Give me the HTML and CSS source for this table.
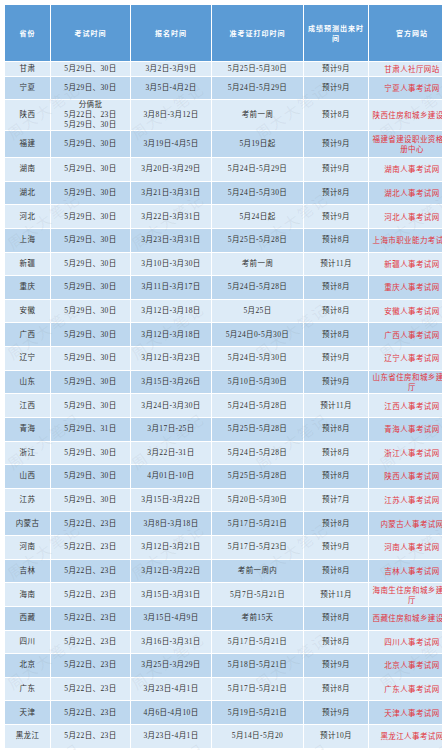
FILE: index.html
```html
<!DOCTYPE html>
<html lang="zh-CN">
<head>
<meta charset="utf-8">
<title>考试时间表</title>
<link rel="stylesheet" href="styles.css">
</head>
<body>
<div class="page">
  <table class="exam">
    <colgroup>
      <col class="w1"><col class="w2"><col class="w3"><col class="w4"><col class="w5"><col class="w6">
    </colgroup>
    <thead>
      <tr><th>省份</th><th>考试时间</th><th>报名时间</th><th>准考证打印时间</th><th>成绩预测出来时间</th><th>官方网站</th></tr>
    </thead>
    <tbody>
      <tr class="lt h15"><td>甘肃</td><td>5月29日、30日</td><td>3月2日-3月9日</td><td>5月25日-5月30日</td><td>预计9月</td><td class="site">甘肃人社厅网站</td></tr>
      <tr class="dk h23"><td>宁夏</td><td>5月29日、30日</td><td>3月5日-4月2日</td><td>5月24日-5月29日</td><td>预计9月</td><td class="site">宁夏人事考试网</td></tr>
      <tr class="lt h31"><td>陕西</td><td>分俩批<br>5月22日、23日<br>5月29日、30日</td><td>3月8日-3月12日</td><td>考前一周</td><td>预计8月</td><td class="site">陕西住房和城乡建设厅</td></tr>
      <tr class="dk h27"><td>福建</td><td>5月29日、30日</td><td>3月19日-4月5日</td><td>5月19日起</td><td>预计9月</td><td class="site">福建省建设职业资格注册中心</td></tr>
      <tr class="lt"><td>湖南</td><td>5月29日、30日</td><td>3月20日-3月29日</td><td>5月24日-5月29日</td><td>预计9月</td><td class="site">湖南人事考试网</td></tr>
      <tr class="dk"><td>湖北</td><td>5月29日、30日</td><td>3月21日-3月31日</td><td>5月24日-5月30日</td><td>预计8月</td><td class="site">湖北人事考试网</td></tr>
      <tr class="lt"><td>河北</td><td>5月29日、30日</td><td>3月22日-3月31日</td><td>5月24日起</td><td>预计9月</td><td class="site">河北人事考试网</td></tr>
      <tr class="dk"><td>上海</td><td>5月29日、30日</td><td>3月23日-3月31日</td><td>5月25日-5月28日</td><td>预计8月</td><td class="site">上海市职业能力考试院</td></tr>
      <tr class="lt"><td>新疆</td><td>5月29日、30日</td><td>3月10日-3月30日</td><td>考前一周</td><td>预计11月</td><td class="site">新疆人事考试网</td></tr>
      <tr class="dk"><td>重庆</td><td>5月29日、30日</td><td>3月11日-3月17日</td><td>5月24日-5月28日</td><td>预计8月</td><td class="site">重庆人事考试网</td></tr>
      <tr class="lt"><td>安徽</td><td>5月29日、30日</td><td>3月12日-3月18日</td><td>5月25日</td><td>预计8月</td><td class="site">安徽人事考试网</td></tr>
      <tr class="dk"><td>广西</td><td>5月29日、30日</td><td>3月12日-3月18日</td><td>5月24日0-5月30日</td><td>预计8月</td><td class="site">广西人事考试网</td></tr>
      <tr class="lt"><td>辽宁</td><td>5月29日、30日</td><td>3月12日-3月23日</td><td>5月24日-5月30日</td><td>预计9月</td><td class="site">辽宁人事考试网</td></tr>
      <tr class="dk"><td>山东</td><td>5月29日、30日</td><td>3月15日-3月26日</td><td>5月10日-5月30日</td><td>预计9月</td><td class="site">山东省住房和城乡建设厅</td></tr>
      <tr class="lt"><td>江西</td><td>5月29日、30日</td><td>3月24日-3月30日</td><td>5月24日-5月28日</td><td>预计11月</td><td class="site">江西人事考试网</td></tr>
      <tr class="dk"><td>青海</td><td>5月29日、31日</td><td>3月17日-25日</td><td>5月25日-5月28日</td><td>预计8月</td><td class="site">青海人事考试网</td></tr>
      <tr class="lt"><td>浙江</td><td>5月29日、30日</td><td>3月22日-31日</td><td>5月24日-5月28日</td><td>预计8月</td><td class="site">浙江人事考试网</td></tr>
      <tr class="dk"><td>山西</td><td>5月29日、30日</td><td>4月01日-10日</td><td>5月25日-5月28日</td><td>预计8月</td><td class="site">陕西人事考试网</td></tr>
      <tr class="lt"><td>江苏</td><td>5月29日、30日</td><td>3月15日-3月22日</td><td>5月20日-5月30日</td><td>预计7月</td><td class="site">江苏人事考试网</td></tr>
      <tr class="dk"><td>内蒙古</td><td>5月22日、23日</td><td>3月8日-3月18日</td><td>5月17日-5月21日</td><td>预计8月</td><td class="site">内蒙古人事考试网</td></tr>
      <tr class="lt"><td>河南</td><td>5月22日、23日</td><td>3月12日-3月21日</td><td>5月17日-5月23日</td><td>预计9月</td><td class="site">河南人事考试网</td></tr>
      <tr class="dk"><td>吉林</td><td>5月22日、23日</td><td>3月12日-3月22日</td><td>考前一周内</td><td>预计8月</td><td class="site">吉林人事考试网</td></tr>
      <tr class="lt"><td>海南</td><td>5月22日、23日</td><td>3月15日-3月31日</td><td>5月7日-5月21日</td><td>预计11月</td><td class="site">海南生住房和城乡建设厅</td></tr>
      <tr class="dk"><td>西藏</td><td>5月22日、23日</td><td>3月15日-4月9日</td><td>考前15天</td><td>预计8月</td><td class="site">西藏住房和城乡建设厅</td></tr>
      <tr class="lt"><td>四川</td><td>5月22日、23日</td><td>3月16日-3月31日</td><td>5月17日-5月21日</td><td>预计8月</td><td class="site">四川人事考试网</td></tr>
      <tr class="dk"><td>北京</td><td>5月22日、23日</td><td>3月25日-3月29日</td><td>5月18日-5月21日</td><td>预计9月</td><td class="site">北京人事考试网</td></tr>
      <tr class="lt"><td>广东</td><td>5月22日、23日</td><td>3月23日-4月1日</td><td>5月17日-5月21日</td><td>预计8月</td><td class="site">广东人事考试网</td></tr>
      <tr class="dk"><td>天津</td><td>5月22日、23日</td><td>4月6日-4月10日</td><td>5月19日-5月21日</td><td>预计9月</td><td class="site">天津人事考试网</td></tr>
      <tr class="lt"><td>黑龙江</td><td>5月22日、23日</td><td>3月23日-4月1日</td><td>5月14日-5月20</td><td>预计10月</td><td class="site">黑龙江人事考试网</td></tr>
    </tbody>
  </table>
  <div class="watermark" aria-hidden="true">
    <span>周大大笔记</span><span>周大大笔记</span><span>周大大笔记</span><span>周大大笔记</span>
    <span>周大大笔记</span><span>周大大笔记</span><span>周大大笔记</span><span>周大大笔记</span>
    <span>周大大笔记</span><span>周大大笔记</span><span>周大大笔记</span><span>周大大笔记</span>
    <span>周大大笔记</span><span>周大大笔记</span><span>周大大笔记</span><span>周大大笔记</span>
    <span>周大大笔记</span><span>周大大笔记</span><span>周大大笔记</span><span>周大大笔记</span>
    <span>周大大笔记</span><span>周大大笔记</span><span>周大大笔记</span><span>周大大笔记</span>
    <span>周大大笔记</span><span>周大大笔记</span><span>周大大笔记</span><span>周大大笔记</span>
  </div>
</div>
</body>
</html>
```

FILE: styles.css
```css
html, body {
  margin: 0;
  padding: 0;
  background: #ffffff;
  overflow: hidden;
}

.page {
  position: relative;
  width: 460px;
  height: 750px;
  padding: 4px 0 0 4px;
  box-sizing: border-box;
  overflow: hidden;
}

.exam {
  border-collapse: collapse;
  table-layout: fixed;
  width: 451px;
  font-family: "Liberation Serif", "Noto Sans CJK SC", serif;
  font-size: 7.5px;
  letter-spacing: 0.4px;
  color: #333333;
  border-bottom: 1px solid #c9ccd0;
}

.w1 { width: 46px; }
.w2 { width: 80px; }
.w3 { width: 81px; }
.w4 { width: 92px; }
.w5 { width: 65px; }
.w6 { width: 87px; }

.exam th,
.exam td {
  border: 1px solid #ffffff;
  padding: 0 2px;
  text-align: center;
  vertical-align: middle;
  line-height: 10px;
  overflow: hidden;
}

.exam th {
  background: #5b9bd5;
  color: #ffffff;
  font-weight: bold;
  font-family: "Noto Sans CJK SC", sans-serif;
  font-size: 7px;
  letter-spacing: 1px;
  height: 56px;
  padding: 0 3px;
}

.exam tbody tr { height: 23.64px; }
.exam tbody tr.h15 { height: 15px; }
.exam tbody tr.h23 { height: 23px; }
.exam tbody tr.h31 { height: 31px; }
.exam tbody tr.h27 { height: 27px; }

.lt td { background: #ddebf7; }
.dk td { background: #bdd7ee; }

.exam td.site {
  color: #e2343c;
  font-family: "Noto Sans CJK SC", sans-serif;
}

.watermark {
  position: absolute;
  top: 55px;
  left: -18px;
  width: 500px;
  display: grid;
  grid-template-columns: repeat(4, 124px);
  grid-auto-rows: 110px;
  pointer-events: none;
}

.watermark span {
  align-self: center;
  justify-self: center;
  transform: rotate(-35deg);
  font-family: "Noto Sans CJK SC", sans-serif;
  font-size: 15px;
  letter-spacing: 2px;
  white-space: nowrap;
  color: rgba(110, 120, 135, 0.09);
}
```
